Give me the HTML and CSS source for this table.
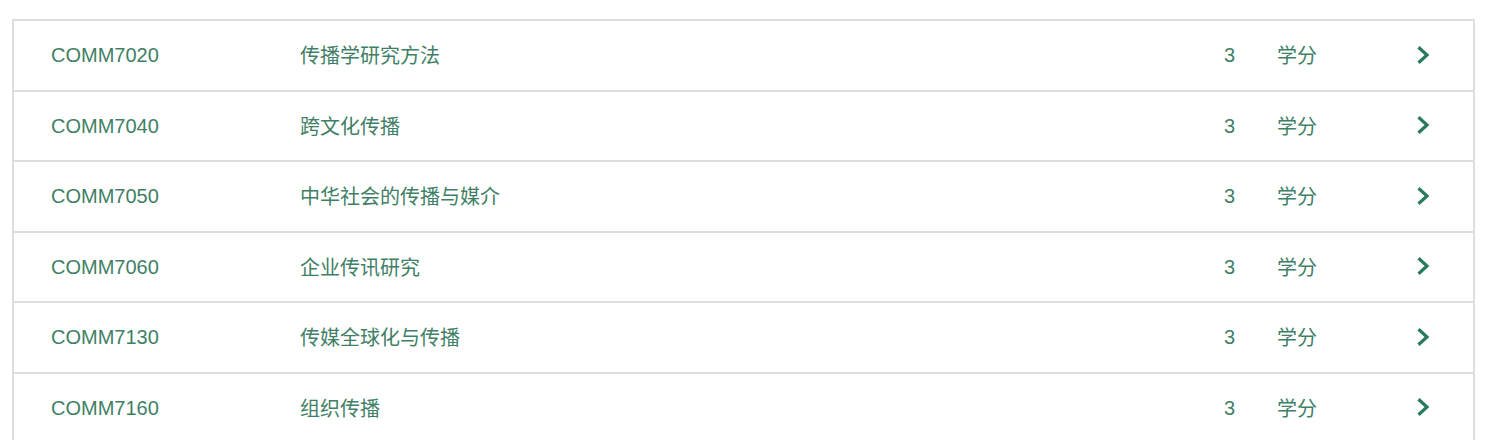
FILE: index.html
```html
<!DOCTYPE html>
<html lang="zh-CN">
<head>
<meta charset="utf-8">
<title>Courses</title>
<link rel="stylesheet" href="styles.css">
</head>
<body>
<div class="course-list">
  <a class="course-row" href="#">
    <span class="code">COMM7020</span>
    <span class="name">传播学研究方法</span>
    <span class="credit">3</span>
    <span class="unit">学分</span>
    <svg class="chev" viewBox="0 0 14 18" width="14" height="18"><path d="M2.5 1.2 L11 9 L2.5 16.8" fill="none" stroke="currentColor" stroke-width="3.2"/></svg>
  </a>
  <a class="course-row" href="#">
    <span class="code">COMM7040</span>
    <span class="name">跨文化传播</span>
    <span class="credit">3</span>
    <span class="unit">学分</span>
    <svg class="chev" viewBox="0 0 14 18" width="14" height="18"><path d="M2.5 1.2 L11 9 L2.5 16.8" fill="none" stroke="currentColor" stroke-width="3.2"/></svg>
  </a>
  <a class="course-row" href="#">
    <span class="code">COMM7050</span>
    <span class="name">中华社会的传播与媒介</span>
    <span class="credit">3</span>
    <span class="unit">学分</span>
    <svg class="chev" viewBox="0 0 14 18" width="14" height="18"><path d="M2.5 1.2 L11 9 L2.5 16.8" fill="none" stroke="currentColor" stroke-width="3.2"/></svg>
  </a>
  <a class="course-row" href="#">
    <span class="code">COMM7060</span>
    <span class="name">企业传讯研究</span>
    <span class="credit">3</span>
    <span class="unit">学分</span>
    <svg class="chev" viewBox="0 0 14 18" width="14" height="18"><path d="M2.5 1.2 L11 9 L2.5 16.8" fill="none" stroke="currentColor" stroke-width="3.2"/></svg>
  </a>
  <a class="course-row" href="#">
    <span class="code">COMM7130</span>
    <span class="name">传媒全球化与传播</span>
    <span class="credit">3</span>
    <span class="unit">学分</span>
    <svg class="chev" viewBox="0 0 14 18" width="14" height="18"><path d="M2.5 1.2 L11 9 L2.5 16.8" fill="none" stroke="currentColor" stroke-width="3.2"/></svg>
  </a>
  <a class="course-row" href="#">
    <span class="code">COMM7160</span>
    <span class="name">组织传播</span>
    <span class="credit">3</span>
    <span class="unit">学分</span>
    <svg class="chev" viewBox="0 0 14 18" width="14" height="18"><path d="M2.5 1.2 L11 9 L2.5 16.8" fill="none" stroke="currentColor" stroke-width="3.2"/></svg>
  </a>
</div>
</body>
</html>
```

FILE: styles.css
```css
html, body {
  margin: 0;
  padding: 0;
  background: #ffffff;
}

body {
  padding: 19px 30px 0 12px;
  font-family: "Liberation Sans", "Noto Sans CJK SC", Arial, sans-serif;
  font-size: 20px;
  color: #3f7f66;
  overflow: hidden;
  height: 440px;
  box-sizing: border-box;
}

.course-list {
  border: 2px solid #dedede;
  border-bottom: none;
}

.course-row {
  display: flex;
  align-items: center;
  height: 68.5px;
  border-bottom: 2px solid #dedede;
  padding: 0 43px 0 37px;
  color: inherit;
  text-decoration: none;
  line-height: 1;
}

.code {
  width: 249px;
  flex: none;
}

.name {
  flex: 1;
  font-family: "Noto Sans CJK SC", "Liberation Sans", sans-serif;
}

.credit {
  width: 53px;
  flex: none;
}

.unit {
  width: 139px;
  flex: none;
  font-family: "Noto Sans CJK SC", "Liberation Sans", sans-serif;
}

.chev {
  flex: none;
  display: block;
  color: #287a5c;
  margin-top: -1px;
}
```
